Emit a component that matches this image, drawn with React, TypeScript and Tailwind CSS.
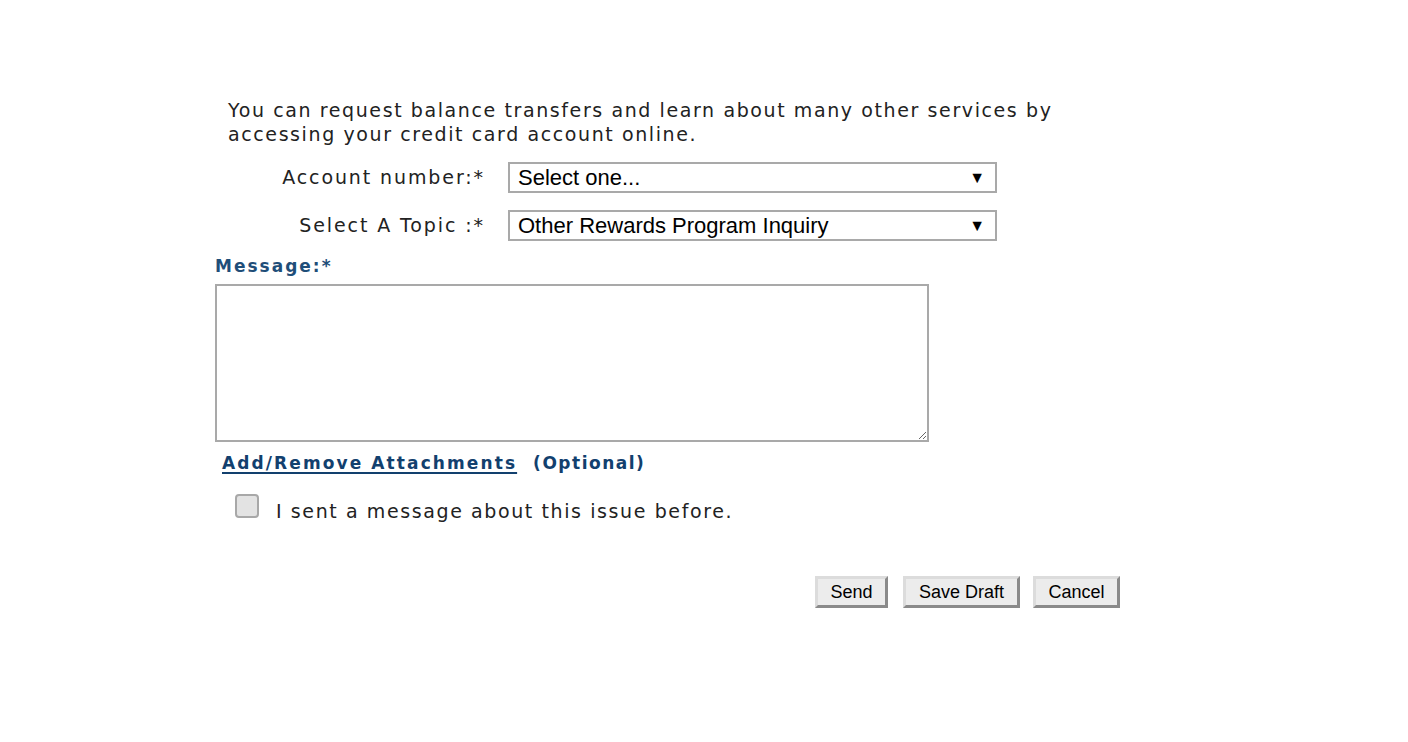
import { useState } from "react";

const verdana = "font-['DejaVu_Sans',Verdana,sans-serif]";
const arial = "font-['Liberation_Sans',Arial,sans-serif]";

const FakeSelect = ({ value }: { value: string }) => (
  <div
    className={`flex h-[31px] w-[489px] items-center justify-between border-2 border-[#a9a9a9] bg-white pl-[8px] pr-[10px] text-[22px] leading-none tracking-normal text-black ${arial}`}
  >
    <span>{value}</span>
    <span className="text-[16px]">▼</span>
  </div>
);

const Btn = ({ label, w }: { label: string; w: string }) => (
  <button
    className={`h-[32px] ${w} border-[3px] border-t-[#dcdcdc] border-l-[#dcdcdc] border-b-[#8a8a8a] border-r-[#8a8a8a] bg-[#ececec] text-[18px] leading-none tracking-normal text-black ${arial}`}
  >
    {label}
  </button>
);

export default function App() {
  const [sentBefore, setSentBefore] = useState(false);

  return (
    <div className={`min-h-screen bg-white pt-[98px] pl-[215px] text-[#222] ${verdana}`}>
      <div className="w-[910px]">
        <p className="pl-[13px] text-[19px] leading-[24px] tracking-[1.6px]">
          You can request balance transfers and learn about many other services by
          <br />
          accessing your credit card account online.
        </p>

        <div className="mt-[16px] grid grid-cols-[270px_489px] items-center gap-x-[23px] gap-y-[17px] text-[19px] tracking-[1.9px]">
          <span className="text-right">Account number:*</span>
          <FakeSelect value="Select one..." />
          <span className="text-right">Select A Topic :*</span>
          <FakeSelect value="Other Rewards Program Inquiry" />
        </div>

        <div className="mt-[15px] text-[17px] font-bold leading-[20px] tracking-[2px] text-[#1f4e79]">Message:*</div>
        <textarea className="mt-[8px] block h-[158px] w-[714px] resize-y border-2 border-[#a9a9a9] bg-white p-1 outline-none" />

        <div className="mt-[9px] flex items-baseline gap-[16px] pl-[7px] text-[17px] font-bold tracking-[1.5px] text-[#12406e]">
          <a href="#" className="tracking-[2.1px] underline decoration-2 underline-offset-[3px]">
            Add/Remove Attachments
          </a>
          <span>(Optional)</span>
        </div>

        <label className="mt-[17px] flex items-start gap-[17px] pl-[20px] text-[19px] tracking-[1.6px]">
          <span
            onClick={() => setSentBefore(!sentBefore)}
            className="flex h-[24px] w-[24px] items-center justify-center rounded-[4px] border-2 border-[#a8a8a8] bg-[#e3e3e3] text-[14px]"
          >
            {sentBefore ? "✓" : ""}
          </span>
          <span className="mt-[5px] leading-[24px]">I sent a message about this issue before.</span>
        </label>

        <div className="mt-[53px] flex justify-end pr-[5px]">
          <Btn label="Send" w="w-[73px]" />
          <div className="ml-[15px]">
            <Btn label="Save Draft" w="w-[117px]" />
          </div>
          <div className="ml-[13px]">
            <Btn label="Cancel" w="w-[87px]" />
          </div>
        </div>
      </div>
    </div>
  );
}
